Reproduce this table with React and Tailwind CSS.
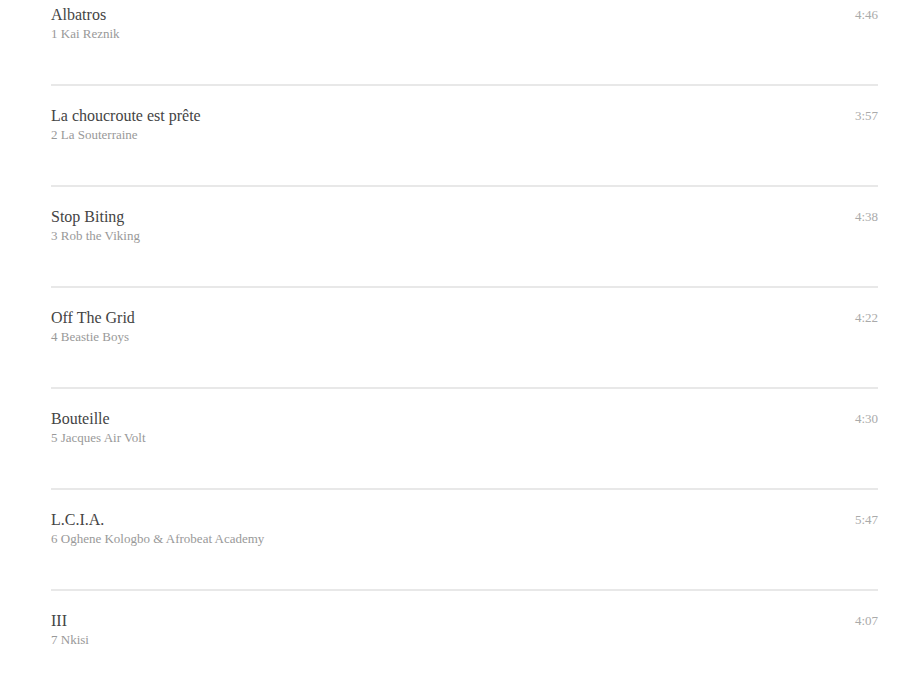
const tracks = [
  { title: "Albatros", artist: "1 Kai Reznik", time: "4:46" },
  { title: "La choucroute est prête", artist: "2 La Souterraine", time: "3:57" },
  { title: "Stop Biting", artist: "3 Rob the Viking", time: "4:38" },
  { title: "Off The Grid", artist: "4 Beastie Boys", time: "4:22" },
  { title: "Bouteille", artist: "5 Jacques Air Volt", time: "4:30" },
  { title: "L.C.I.A.", artist: "6 Oghene Kologbo & Afrobeat Academy", time: "5:47" },
  { title: "III", artist: "7 Nkisi", time: "4:07" },
];

export default function App() {
  return (
    <div className="min-h-[677px] bg-white font-['Liberation_Serif','DejaVu_Serif',serif]">
      <ul className="ml-[51px] mr-[20px] flex flex-col gap-[15px]">
        {tracks.map((t, i) => (
          <li
            key={i}
            className="h-[86px] flex justify-between pt-[5px] border-b-2 border-[#e8e8e8] last:border-b-0"
          >
            <div>
              <div className="text-[16px] leading-[19px] text-[#444]">{t.title}</div>
              <div className="text-[13px] leading-[16px] text-[#999] mt-[2px]">{t.artist}</div>
            </div>
            <div className="text-[13px] leading-[16px] text-[#aaa] pt-[2px]">{t.time}</div>
          </li>
        ))}
      </ul>
    </div>
  );
}
